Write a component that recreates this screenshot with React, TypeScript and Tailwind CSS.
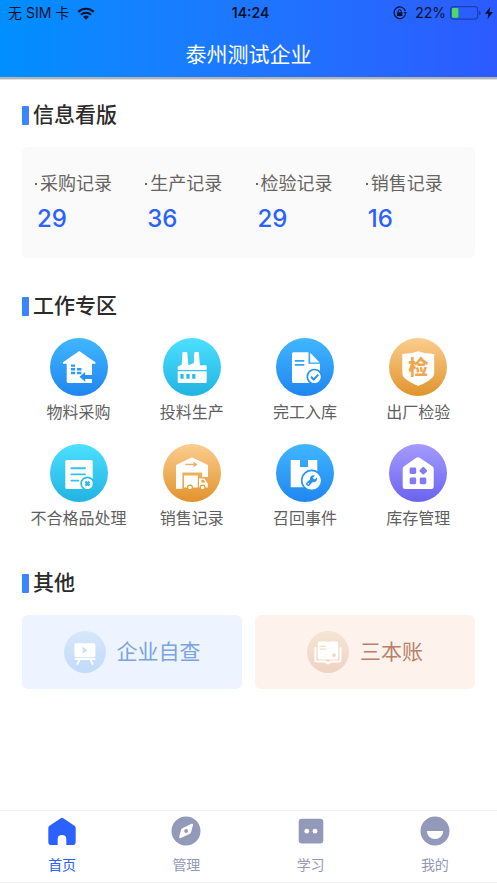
import type { ReactNode } from "react";

type Tone = "blue" | "cyan" | "orange" | "purple";

const toneColors: Record<Tone, [string, string]> = {
  blue: ["#41b6ff", "#1f86f0"],
  cyan: ["#4de0ff", "#21b3e2"],
  orange: ["#fbcd8f", "#e0942c"],
  purple: ["#a49bff", "#6b63ee"],
};

function Disc({ id, tone, children }: { id: string; tone: Tone; children: ReactNode }) {
  const [from, to] = toneColors[tone];
  return (
    <svg viewBox="0 0 58 58" className="size-[58px]" aria-hidden="true">
      <defs>
        <linearGradient id={id} x1="0" y1="0" x2="0" y2="1">
          <stop offset="0" stopColor={from} />
          <stop offset="1" stopColor={to} />
        </linearGradient>
      </defs>
      <circle cx="29" cy="29" r="29" fill={`url(#${id})`} />
      {children}
    </svg>
  );
}

const PurchaseIcon = () => (
  <Disc id="purchase" tone="blue">
    <path d="M29.2 13 45.4 24.2V25.8H42V45H18.2Q16.7 45 16.7 43.5V25.8H13V24.2Z" fill="#fff" />
    <path d="M21 26.4h4.2v2.4H21zM21 30h4.2v2.4H21zM21 33.7h4.2v2.5H21zM27 30h4.4v2.4H27zM27 33.7h4.4v2.5H27z" fill="#2f9cf8" />
    <path d="M29.5 38.8 35.2 34V37H42.4V41H35.2V43.8Z" fill="#2892f4" />
  </Disc>
);

const FactoryIcon = () => (
  <Disc id="factory" tone="cyan">
    <path d="M20.2 14h3.4q.7 0 .7.8l.7 8.9.6 3.6L30.8 25l.5-10.2q0-.8.8-.8h3q.8 0 .8.8l.7 9.2.5 3.3h5.6q1 0 1 1V32H14.7v-3.3l4.1-2.2.6-11.7q0-.8.8-.8Z" fill="#fff" />
    <path d="M14.7 33.2h29V43.8q0 1.2-1.2 1.2H15.9q-1.2 0-1.2-1.2Z" fill="#fff" />
    <path d="M17.4 36h3.2v4.8h-3.2zM23.4 36h3.2v4.8h-3.2zM29.2 36h3.2v4.8h-3.2z" fill="#29bde6" />
  </Disc>
);

const InboundIcon = () => (
  <Disc id="inbound" tone="blue">
    <path d="M17.5 14.3H32.5V25.7H44V45H17.5Q16 45 16 43.5V15.8Q16 14.3 17.5 14.3Z" fill="#fff" />
    <path d="M34.2 14.8 43.6 24.4H34.2Z" fill="#fff" />
    <path d="M18.8 22.9H28.3M18.8 26.9H28.3" stroke="#32a0fa" strokeWidth="1.8" />
    <circle cx="38.5" cy="38.7" r="7.2" fill="#fff" stroke="#2892f4" strokeWidth="1.7" />
    <path d="m35 38.8 2.7 2.7 4.6-4.9" fill="none" stroke="#2892f4" strokeWidth="2" />
  </Disc>
);

const InspectIcon = () => (
  <Disc id="inspect" tone="orange">
    <path d="M29.2 13.2Q36.5 16 45.2 16V35.5Q45.2 38 43 40 37.5 45 29.2 47.8 21 45 15.5 40 13.3 38 13.3 35.5V16Q22 16 29.2 13.2Z" fill="#fff" />
    <text x="29.2" y="37" textAnchor="middle" fontSize="20" className="font-black" fill="#eda750">检</text>
  </Disc>
);

const RejectIcon = () => (
  <Disc id="reject" tone="cyan">
    <rect x="15.3" y="16" width="27.4" height="29" rx="1.5" fill="#fff" />
    <path d="M21.4 24.3H35M21.4 30.4H35M21.4 36.6H28.4" stroke="#30c3ec" strokeWidth="1.9" strokeLinecap="round" />
    <circle cx="37.4" cy="39.6" r="6.3" fill="#fff" stroke="#2abce8" strokeWidth="1.7" />
    <path d="m35.4 37.6 4 4m0-4-4 4" stroke="#27b8e4" strokeWidth="2.2" />
  </Disc>
);

const SalesIcon = () => (
  <Disc id="sales" tone="orange">
    <path d="M29 13.3 45 21V33H39.2V28.4H19.4V44.7H13V21Z" fill="#fff" />
    <path d="M22.2 20.4H32" stroke="#f0b163" strokeWidth="1.4" />
    <path d="m30.7 17.4 3.8 3-3.8 3Z" fill="#f0b163" />
    <path d="M21 31.6H34.8V43.6H21zM36 34.4h4.5q.9 0 1.4.8l2 3.2.9.8v4.4H36Z" fill="#fff" />
    <path d="M38.5 35.8h2.2l1.6 2.8h-3.8Z" fill="#e8a347" />
    <circle cx="27" cy="43.5" r="2.4" fill="#fff" stroke="#e39a37" strokeWidth="1.2" />
    <circle cx="39.6" cy="43.5" r="2.4" fill="#fff" stroke="#e39a37" strokeWidth="1.2" />
  </Disc>
);

const RecallIcon = () => (
  <Disc id="recall" tone="blue">
    <path d="M14.7 16H24V23H32V16H41.3V43.3H14.7Z" fill="#fff" />
    <circle cx="35.7" cy="36.4" r="10" fill="#fff" stroke="#2b96f5" strokeWidth="1.6" />
    <path d="M41 33.5 38.6 35.5 36.8 33.9 38.8 31.3C36 30.5 33.4 32.8 34 35.6L30.6 38.6C29.2 40 30.8 43 33.3 41.7L36.4 38.2C39.4 38.8 41.7 36.5 41 33.5Z" fill="#2a93f4" />
    <circle cx="32.4" cy="39.8" r=".8" fill="#fff" />
  </Disc>
);

const StockIcon = () => (
  <Disc id="stock" tone="purple">
    <path d="M27.3 13.8Q29 12.6 30.7 13.8L43.6 22.4Q44.7 23.2 44.7 24.5V42.5Q44.7 45 42.2 45H16.2Q13.7 45 13.7 42.5V24.5Q13.7 23.2 14.8 22.4Z" fill="#fff" />
    <g fill="#837af4">
      <rect x="20.6" y="23.4" width="6.6" height="6.6" rx="1.4" />
      <rect x="31.3" y="23.7" width="6" height="6" rx="1" transform="rotate(45 34.3 26.7)" />
      <rect x="20.6" y="33.6" width="6.6" height="6.6" rx="1.4" />
      <rect x="30.7" y="33.6" width="6.6" height="6.6" rx="1.4" />
    </g>
  </Disc>
);

const BoardIcon = () => (
  <svg viewBox="0 0 42 42" className="size-[42px]" aria-hidden="true">
    <defs>
      <linearGradient id="board" x1="0" y1="0" x2="0" y2="1">
        <stop offset="0" stopColor="#d6e7fb" />
        <stop offset="1" stopColor="#c1dbf9" />
      </linearGradient>
    </defs>
    <circle cx="21" cy="21" r="21" fill="url(#board)" />
    <rect x="10.4" y="12.3" width="21" height="13.9" rx="1.6" fill="#fff" />
    <path d="m18.7 16 5 3.2-5 3.2Z" fill="#c8dffa" />
    <path d="M11.5 28H30.6M15.5 29 13.3 33M26.5 29l2.2 4" stroke="#fff" strokeWidth="1.8" strokeLinecap="round" />
  </svg>
);

const LedgerIcon = () => (
  <svg viewBox="0 0 42 42" className="size-[42px]" aria-hidden="true">
    <defs>
      <linearGradient id="ledger" x1="0" y1="0" x2="0" y2="1">
        <stop offset="0" stopColor="#f6e5d3" />
        <stop offset="1" stopColor="#efd2c2" />
      </linearGradient>
    </defs>
    <circle cx="21" cy="21" r="21" fill="url(#ledger)" />
    <path d="M8.4 17V29.5Q8.4 30.6 9.5 30.6H18.2L21 32.4 23.8 30.6H32.4Q33.5 30.6 33.5 29.5V17" fill="none" stroke="#fff" strokeWidth="2" strokeLinecap="round" />
    <path d="M12 10.5H19.6L21 11.2 22.4 10.5H30Q31.2 10.5 31.2 11.7V27.2Q31.2 28.4 30 28.4H12Q10.8 28.4 10.8 27.2V11.7Q10.8 10.5 12 10.5Z" fill="#fff" />
    <path d="M12.6 15.3H19M12.6 18.2H19" stroke="#f3dccb" strokeWidth="1.3" />
    <circle cx="27" cy="24.2" r="1.9" fill="#f1d8c8" />
  </svg>
);

const HomeTab = () => (
  <svg viewBox="0 0 30 30" className="size-[30px]" aria-hidden="true">
    <path d="M13.8 2.3Q15 1.4 16.2 2.3L27.5 9.8Q28.7 10.7 28.7 12V25.9Q28.7 29 25.6 29H19.3V23.2Q19.3 19 15 19T10.7 23.2V29H4.4Q1.3 29 1.3 25.9V12Q1.3 10.7 2.5 9.8Z" fill="currentColor" />
  </svg>
);

const CompassTab = () => (
  <svg viewBox="0 0 30 30" className="size-[30px]" aria-hidden="true">
    <circle cx="15" cy="15" r="14.5" fill="currentColor" />
    <path d="M20.5 7.8Q22.3 7.2 22 9L20.2 15.8Q20 17 19 17.7L9.8 22Q8 22.6 8.2 20.8L10 14Q10.3 12.9 11.3 12.3Z" fill="#fff" />
    <circle cx="15.1" cy="15" r="1.9" fill="currentColor" />
  </svg>
);

const StudyTab = () => (
  <svg viewBox="0 0 30 30" className="size-[30px]" aria-hidden="true">
    <rect x="2.7" y="2.8" width="24.6" height="24.6" rx="3.2" fill="currentColor" />
    <circle cx="10.8" cy="15.2" r="2.4" fill="#fff" />
    <circle cx="19" cy="15.2" r="2.4" fill="#fff" />
  </svg>
);

const MineTab = () => (
  <svg viewBox="0 0 30 30" className="size-[30px]" aria-hidden="true">
    <circle cx="15" cy="15" r="14.5" fill="currentColor" />
    <path d="M6.8 15H23.2A8.2 8 0 0 1 6.8 15Z" fill="#fff" />
  </svg>
);

const stats = [
  { label: "采购记录", value: 29 },
  { label: "生产记录", value: 36 },
  { label: "检验记录", value: 29 },
  { label: "销售记录", value: 16 },
];

const tasks = [
  { label: "物料采购", Icon: PurchaseIcon },
  { label: "投料生产", Icon: FactoryIcon },
  { label: "完工入库", Icon: InboundIcon },
  { label: "出厂检验", Icon: InspectIcon },
  { label: "不合格品处理", Icon: RejectIcon },
  { label: "销售记录", Icon: SalesIcon },
  { label: "召回事件", Icon: RecallIcon },
  { label: "库存管理", Icon: StockIcon },
];

const tabs = [
  { label: "首页", Icon: HomeTab, active: true },
  { label: "管理", Icon: CompassTab, active: false },
  { label: "学习", Icon: StudyTab, active: false },
  { label: "我的", Icon: MineTab, active: false },
];

function StatusBar() {
  return (
    <div className="grid h-[26px] grid-cols-[1fr_auto_1fr] items-center pr-1 pl-2 text-sm leading-5 text-[#06122e]">
      <div className="flex items-center gap-2">
        <span>无 SIM 卡</span>
        <svg viewBox="0 0 18 13" className="h-[13px] w-[18px]" aria-hidden="true">
          <path d="M1.3 4.9a11 11 0 0 1 15.4 0M4 7.8a7.1 7.1 0 0 1 10 0" fill="none" stroke="currentColor" strokeWidth="2.2" />
          <path d="M6.1 9.9a4.1 4.1 0 0 1 5.8 0L9 12.8Z" fill="currentColor" />
        </svg>
      </div>
      <span className="font-semibold">14:24</span>
      <div className="flex items-center justify-end">
        <svg viewBox="0 0 14 14" className="mr-2 size-[14px]" aria-hidden="true">
          <path d="M12.4 8.6A5.8 5.8 0 1 1 12.4 5" fill="none" stroke="currentColor" strokeWidth="1.2" />
          <path d="M10.6 6H14l-1.7 2.4Z" fill="currentColor" />
          <rect x="4" y="6.3" width="5.4" height="3.8" rx=".5" fill="currentColor" />
          <path d="M5.2 6.4V5.2a1.5 1.5 0 0 1 3 0v1.2" fill="none" stroke="currentColor" strokeWidth="1" />
        </svg>
        <span className="mr-1">22%</span>
        <svg viewBox="0 0 31 14" className="mr-1 h-[14px] w-[31px]" aria-hidden="true">
          <rect x=".6" y=".6" width="27" height="12.6" rx="3" fill="none" stroke="#1c40a8" strokeWidth="1.2" />
          <rect x="2" y="2" width="6.4" height="9.8" rx="1" fill="#4cd964" />
          <path d="M29 4.7q1.7.6 1.7 2.3T29 9.3Z" fill="#1c40a8" />
        </svg>
        <svg viewBox="0 0 8 12" className="h-[12px] w-[8px]" aria-hidden="true">
          <path d="M5.2 0 0 6.8h3.4L2.6 12 8 4.9H4.4Z" fill="currentColor" />
        </svg>
      </div>
    </div>
  );
}

function SectionTitle({ children }: { children: ReactNode }) {
  return (
    <h2 className="flex items-center gap-1 text-[21px] leading-8 font-medium text-[#2b2b2b]">
      <span className="h-[19px] w-[7px] rounded-[1px] bg-linear-to-r from-[#1e90ff] to-[#4c7bff]" />
      {children}
    </h2>
  );
}

export default function App() {
  return (
    <div className="flex min-h-screen flex-col bg-white font-['Inter','Noto_Sans_CJK_SC',sans-serif]">
      <header className="h-[77px] bg-linear-to-r from-[#008fff] to-[#2c5aff] shadow-[0_2px_0_#b0b3b8,0_3px_0_#e0e0e0]">
        <StatusBar />
        <h1 className="pt-[13px] text-center text-[21px] leading-8 text-white">泰州测试企业</h1>
      </header>

      <main className="flex-1 px-[22px] pt-[22px] pb-8">
        <section>
          <SectionTitle>信息看版</SectionTitle>
          <dl className="mt-4 grid grid-cols-4 rounded-md bg-[#fafafa] px-[6px] pt-5 pb-[21px]">
            {stats.map((s) => (
              <div key={s.label}>
                <dt className="flex items-center text-lg leading-[34px] whitespace-nowrap text-[#666460]">
                  <span className="flex w-3 justify-end pr-[3px]">
                    <span className="size-[2px] bg-[#666460]" />
                  </span>
                  {s.label}
                </dt>
                <dd className="pl-[9px] text-2xl leading-9 font-medium text-[#2b61ff]">{s.value}</dd>
              </div>
            ))}
          </dl>
        </section>

        <section className="mt-8">
          <SectionTitle>工作专区</SectionTitle>
          <div className="mt-4 grid grid-cols-4 gap-y-4">
            {tasks.map(({ label, Icon }) => (
              <button key={label} type="button" className="flex flex-col items-center">
                <Icon />
                <span className="text-base leading-8 whitespace-nowrap text-[#606060]">{label}</span>
              </button>
            ))}
          </div>
        </section>

        <section className="mt-[33px]">
          <SectionTitle>其他</SectionTitle>
          <div className="mt-4 grid grid-cols-2 gap-[13px]">
            <button type="button" className="flex h-[74px] items-center justify-center gap-[11px] rounded-md bg-[#edf4ff] text-[21px] text-[#7ba3e0]">
              <BoardIcon />
              企业自查
            </button>
            <button type="button" className="flex h-[74px] items-center justify-center gap-[11px] rounded-md bg-[#fdf3ec] text-[21px] text-[#b97f67]">
              <LedgerIcon />
              三本账
            </button>
          </div>
        </section>
      </main>

      <nav className="grid grid-cols-4 border-y border-[#efefef] pt-[5px] pb-[7px]">
        {tabs.map(({ label, Icon, active }) => (
          <button
            key={label}
            type="button"
            aria-current={active ? "page" : undefined}
            className={`flex flex-col items-center gap-[9px] text-sm leading-5 ${active ? "text-[#2b61ff]" : "text-[#9299b9]"}`}
          >
            <Icon />
            {label}
          </button>
        ))}
      </nav>
    </div>
  );
}
